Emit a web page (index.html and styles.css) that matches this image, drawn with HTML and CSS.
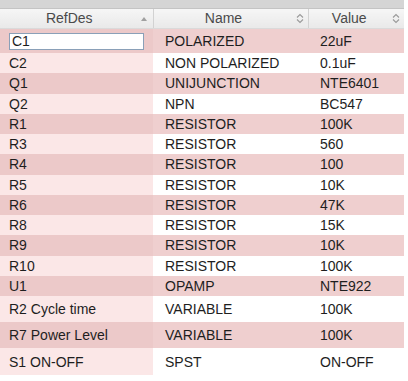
FILE: index.html
```html
<!DOCTYPE html>
<html>
<head>
<meta charset="utf-8">
<link rel="stylesheet" href="styles.css">
</head>
<body>
<div class="grid">
  <div class="topbar"></div>
  <table class="tbl">
    <colgroup><col class="c1"><col class="c2"><col class="c3"></colgroup>
    <thead>
      <tr>
        <th><span class="lbl">RefDes</span><span class="sort-up"></span></th>
        <th><span class="lbl">Name</span><svg class="sort2" width="8" height="11" viewBox="0 0 8 11"><path d="M1 4.5 L4 1.5 L7 4.5 M1 6.5 L4 9.5 L7 6.5" fill="none" stroke="#9a9a9a" stroke-width="1.1"/></svg></th>
        <th><span class="lbl">Value</span><svg class="sort2" width="8" height="11" viewBox="0 0 8 11"><path d="M1 4.5 L4 1.5 L7 4.5 M1 6.5 L4 9.5 L7 6.5" fill="none" stroke="#9a9a9a" stroke-width="1.1"/></svg></th>
      </tr>
    </thead>
    <tbody>
      <tr class="odd first"><td><input class="edit" type="text" value="C1"></td><td>POLARIZED</td><td>22uF</td></tr>
      <tr class="even"><td>C2</td><td>NON POLARIZED</td><td>0.1uF</td></tr>
      <tr class="odd"><td>Q1</td><td>UNIJUNCTION</td><td>NTE6401</td></tr>
      <tr class="even"><td>Q2</td><td>NPN</td><td>BC547</td></tr>
      <tr class="odd"><td>R1</td><td>RESISTOR</td><td>100K</td></tr>
      <tr class="even"><td>R3</td><td>RESISTOR</td><td>560</td></tr>
      <tr class="odd"><td>R4</td><td>RESISTOR</td><td>100</td></tr>
      <tr class="even"><td>R5</td><td>RESISTOR</td><td>10K</td></tr>
      <tr class="odd"><td>R6</td><td>RESISTOR</td><td>47K</td></tr>
      <tr class="even"><td>R8</td><td>RESISTOR</td><td>15K</td></tr>
      <tr class="odd"><td>R9</td><td>RESISTOR</td><td>10K</td></tr>
      <tr class="even"><td>R10</td><td>RESISTOR</td><td>100K</td></tr>
      <tr class="odd"><td>U1</td><td>OPAMP</td><td>NTE922</td></tr>
      <tr class="even tall"><td>R2 Cycle time</td><td>VARIABLE</td><td>100K</td></tr>
      <tr class="odd tall"><td>R7 Power Level</td><td>VARIABLE</td><td>100K</td></tr>
      <tr class="even tall last"><td>S1 ON-OFF</td><td>SPST</td><td>ON-OFF</td></tr>
    </tbody>
  </table>
</div>
</body>
</html>
```
FILE: styles.css
```css
html, body {
  margin: 0;
  padding: 0;
  background: #ffffff;
}
body {
  font-family: Arial, "Liberation Sans", sans-serif;
  font-size: 14px;
  color: #1e1e1e;
}
.grid {
  width: 404px;
}
.topbar {
  height: 8px;
  background: #d5d5d5;
  border-bottom: 1px solid #c4c4c4;
}
.tbl {
  width: 404px;
  border-collapse: collapse;
  table-layout: fixed;
}
.c1 { width: 153px; }
.c2 { width: 155px; }
.c3 { width: 96px; }

.tbl th {
  height: 19px;
  padding: 0 14px 0 0;
  font-weight: normal;
  color: #4a4a4a;
  text-align: center;
  position: relative;
  background: linear-gradient(#f6f6f6, #e9e9e9);
  border-left: 1px solid #d2d2d2;
  border-bottom: 1px solid #dadada;
  line-height: 19px;
}
.tbl th:first-child { border-left: none; }
.sort-up {
  position: absolute;
  right: 6px;
  top: 8px;
  width: 0;
  height: 0;
  border-left: 3.5px solid transparent;
  border-right: 3.5px solid transparent;
  border-bottom: 4px solid #a0a0a0;
}
.sort2 {
  position: absolute;
  right: 4px;
  top: 4px;
}
.tbl td {
  height: 20.25px;
  padding: 0 0 0 12px;
  line-height: 16px;
  white-space: nowrap;
  overflow: hidden;
}
.tbl td:first-child { padding-left: 9px; }
.tbl tr.first td { height: 24px; }
.tbl tr.tall td { height: 26px; }
.tbl tr.last td { height: 27px; }

.odd td { background: #efcfcf; }
.even td { background: #ffffff; }
.odd td:first-child { background: #ecc9c9; }
.even td:first-child { background: #fbe7e7; }

.edit {
  box-sizing: border-box;
  width: 135px;
  height: 17px;
  margin: 0;
  padding: 0 2px;
  border: 1px solid #8aa0b8;
  background: #fff;
  font-family: Arial, "Liberation Sans", sans-serif;
  font-size: 14px;
  color: #1e1e1e;
  display: block;
  outline: none;
}
```
